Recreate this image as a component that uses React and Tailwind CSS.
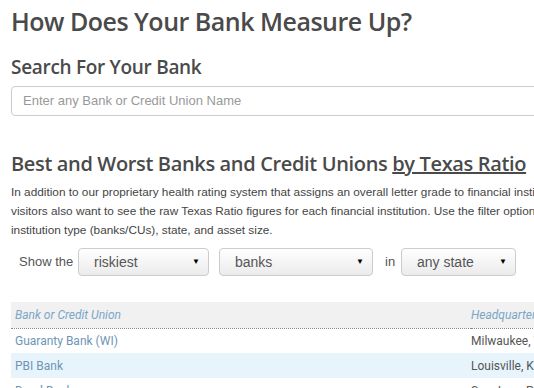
import React from "react";

const Select = ({ label, width }) => (
    <div
        className={`flex items-center justify-between h-[28px] ${width} pl-[15px] pr-[8px] border border-[#cccccc] rounded-[4px] bg-gradient-to-b from-white to-[#ebebeb] text-[14px] text-[#555] shrink-0`}
    >
        <span>{label}</span>
        <span className="text-[8px] text-black">▼</span>
    </div>
);

const rows = [
    { name: "Guaranty Bank (WI)", hq: "Milwaukee, WI" },
    { name: "PBI Bank", hq: "Louisville, KY" },
    { name: "Doral Bank", hq: "San Juan, PR" },
];

const App = () => {
    return (
        <div className="w-[534px] h-[388px] overflow-hidden bg-white font-['Liberation_Sans',Arial,sans-serif]">
            <div className="w-[640px] pl-[11px] pt-[4px]">
                <h1 className="font-['Open_Sans',sans-serif] font-semibold text-[25px] leading-[34px] text-[#4a4a4a] tracking-[-0.5px]">
                    How Does Your Bank Measure Up?
                </h1>
                <h2 className="mt-[15px] font-['Open_Sans',sans-serif] font-semibold text-[19px] leading-[28px] text-[#4a4a4a] tracking-[-0.3px]">
                    Search For Your Bank
                </h2>
                <div className="mt-[5px] h-[30px] border border-[#cccccc] rounded-[4px] flex items-center pl-[11px] text-[13px] text-[#999]">
                    Enter any Bank or Credit Union Name
                </div>

                <h2 className="mt-[33px] font-['Open_Sans',sans-serif] font-semibold text-[20px] leading-[30px] text-[#4a4a4a] tracking-[-0.35px]">
                    Best and Worst Banks and Credit Unions{" "}
                    <a className="underline">by Texas Ratio</a>
                </h2>
                <p className="mt-[4px] text-[11.8px] leading-[19px] text-[#444] whitespace-nowrap">
                    In addition to our proprietary health rating system that assigns an overall letter grade to financial institutions, many
                    <br />
                    visitors also want to see the raw Texas Ratio figures for each financial institution. Use the filter options below to narrow by
                    <br />
                    institution type (banks/CUs), state, and asset size.
                </p>

                <div className="mt-[8px] flex items-center text-[13px] text-[#555]">
                    <span className="ml-[8px] w-[59px]">Show the</span>
                    <Select label="riskiest" width="w-[131px]" />
                    <div className="w-[10px]" />
                    <Select label="banks" width="w-[154px]" />
                    <span className="ml-[12px] w-[16px]">in</span>
                    <Select label="any state" width="w-[115px]" />
                </div>

                <table className="mt-[26px] w-[600px] border-collapse font-['Roboto',sans-serif] text-[12px]">
                    <thead>
                        <tr className="bg-[#f1f1f1] border-b border-dotted border-[#888]">
                            <th className="h-[26px] pl-[4px] text-left font-normal italic text-[#7aa7c7]">
                                Bank or Credit Union
                            </th>
                            <th className="w-[140px] text-left font-normal italic text-[#7aa7c7]">
                                Headquarters
                            </th>
                        </tr>
                    </thead>
                    <tbody>
                        {rows.map((r, i) => (
                            <tr key={r.name} className={i % 2 === 1 ? "bg-[#e8f4fc]" : "bg-white"}>
                                <td className="h-[25px] pl-[4px] text-[#6f95b5]">{r.name}</td>
                                <td className="text-[#555]">{r.hq}</td>
                            </tr>
                        ))}
                    </tbody>
                </table>
            </div>
        </div>
    );
};

export default App;
